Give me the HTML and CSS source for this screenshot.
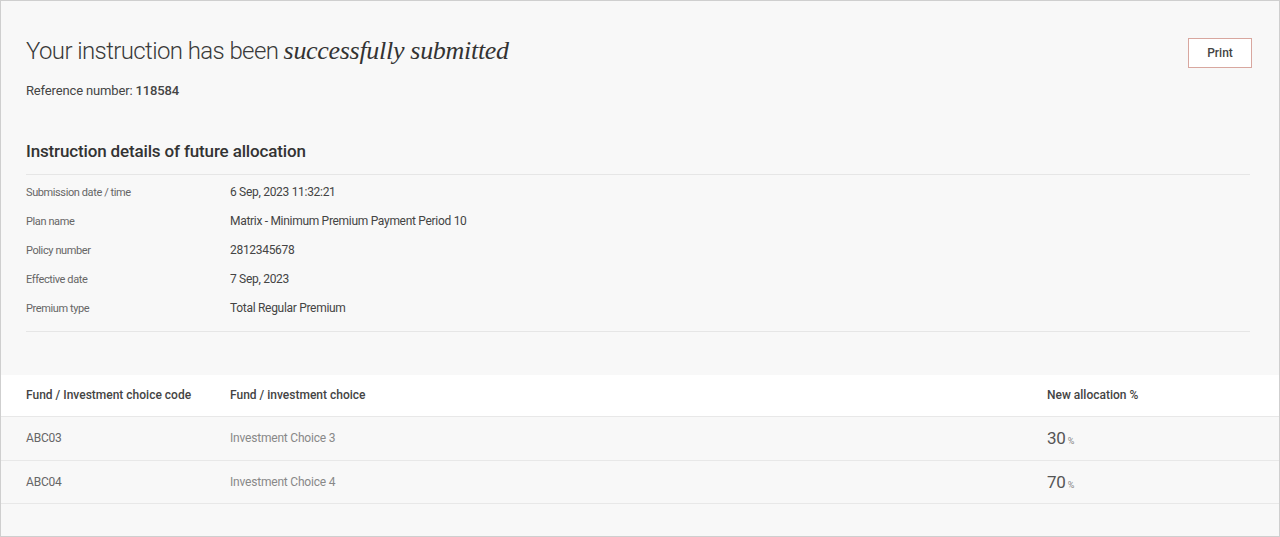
FILE: index.html
```html
<html>

<head>
    <meta name="viewport" content="width=device-width, initial-scale=1.0">
    <title>Instruction submitted</title>
    <link rel="stylesheet" href="styles.css">
</head>

<body>

    <div class="page">

        <div class="top">
            <div class="intro">
                <h1 class="title">Your instruction has been <em>successfully submitted</em></h1>
                <p class="ref">Reference number: <b>118584</b></p>
            </div>
            <button class="print-btn">Print</button>
        </div>

        <div class="details">
            <h2>Instruction details of future allocation</h2>
            <dl class="info">
                <dt>Submission date / time</dt>
                <dd>6 Sep, 2023 11:32:21</dd>
                <dt>Plan name</dt>
                <dd>Matrix - Minimum Premium Payment Period 10</dd>
                <dt>Policy number</dt>
                <dd>2812345678</dd>
                <dt>Effective date</dt>
                <dd>7 Sep, 2023</dd>
                <dt>Premium type</dt>
                <dd>Total Regular Premium</dd>
            </dl>
        </div>

        <table class="funds">
            <thead>
                <tr>
                    <th class="col-code">Fund / Investment choice code</th>
                    <th class="col-name">Fund / investment choice</th>
                    <th class="col-pct">New allocation %</th>
                </tr>
            </thead>
            <tbody>
                <tr>
                    <td class="code">ABC03</td>
                    <td class="name">Investment Choice 3</td>
                    <td class="pct">30<span>%</span></td>
                </tr>
                <tr>
                    <td class="code">ABC04</td>
                    <td class="name">Investment Choice 4</td>
                    <td class="pct">70<span>%</span></td>
                </tr>
            </tbody>
        </table>

    </div>

</body>

</html>
```

FILE: styles.css
```css
body {
    margin: 0;
    padding: 0;
    font-family: Roboto, "Liberation Sans", sans-serif;
    background-color: #f8f8f8;
    color: #444;
}

.page {
    height: 537px;
    box-sizing: border-box;
    border: 1px solid #cfcfcf;
    background-color: #f8f8f8;
}

.top {
    display: flex;
    justify-content: space-between;
    align-items: flex-start;
    padding: 35px 27px 0 25px;
}

.title {
    margin: 0;
    font-size: 24px;
    font-weight: 300;
    letter-spacing: -0.6px;
    color: #3a3a3a;
    line-height: 30px;
}

.title em {
    font-family: "Liberation Serif", serif;
    font-size: 26px;
    letter-spacing: -0.3px;
    color: #333;
}

.ref {
    margin: 17px 0 0 0;
    font-size: 13px;
    letter-spacing: -0.15px;
    color: #444;
}

.ref b {
    font-weight: 500;
}

.print-btn {
    width: 64px;
    height: 30px;
    margin-top: 2px;
    background-color: #fff;
    border: 1px solid #d8a79f;
    font-family: Roboto, sans-serif;
    font-size: 12px;
    font-weight: 500;
    color: #444;
    cursor: pointer;
}

.details {
    margin: 0 29px 0 25px;
    padding-top: 43px;
}

.details h2 {
    margin: 0;
    font-size: 17px;
    font-weight: 500;
    letter-spacing: -0.15px;
    color: #333;
    padding-bottom: 13px;
    border-bottom: 1px solid #e6e6e6;
}

.info {
    display: grid;
    grid-template-columns: 204px 1fr;
    row-gap: 12px;
    margin: 0;
    padding: 9px 0 14px 0;
    border-bottom: 1px solid #e6e6e6;
}

.info dt {
    font-size: 11px;
    letter-spacing: -0.4px;
    color: #666;
    line-height: 17px;
}

.info dd {
    margin: 0;
    font-size: 12px;
    letter-spacing: -0.3px;
    color: #444;
    line-height: 17px;
}

.funds {
    width: 100%;
    margin-top: 43px;
    border-collapse: collapse;
}

.funds th {
    background-color: #fff;
    text-align: left;
    font-size: 12px;
    font-weight: 500;
    color: #444;
    height: 41px;
    padding: 0;
    border-bottom: 1px solid #e8e8e8;
}

.funds td {
    height: 43px;
    padding: 0;
    border-bottom: 1px solid #e8e8e8;
    font-size: 12px;
    letter-spacing: -0.2px;
    color: #666;
}

.funds tbody tr:first-child td {
    height: 44px;
}

.col-code, .code {
    padding-left: 25px !important;
    width: 204px;
}

.col-name {
    width: 817px;
}

.name {
    color: #888 !important;
}

.pct {
    font-size: 17px !important;
    color: #555 !important;
}

.pct span {
    font-size: 9px;
    margin-left: 2px;
    color: #888;
}
```
